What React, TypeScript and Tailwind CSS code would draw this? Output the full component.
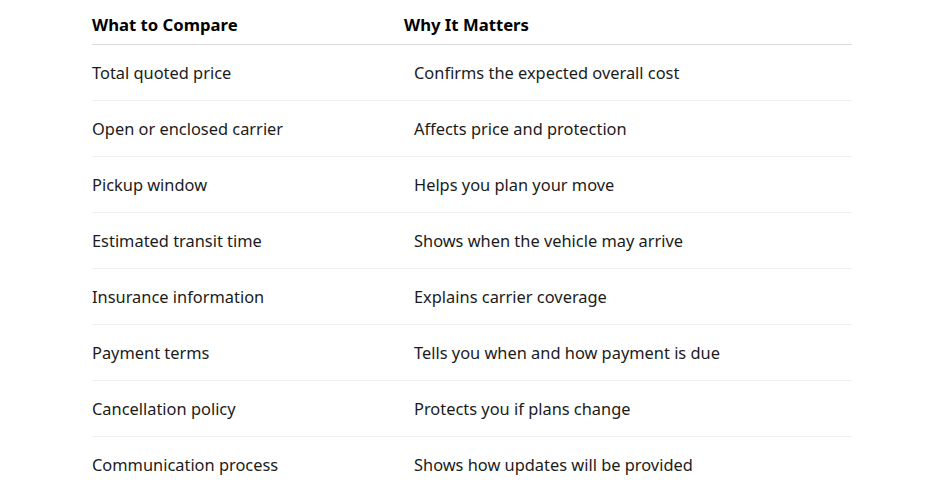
const rows: [string, string][] = [
  ["Total quoted price", "Confirms the expected overall cost"],
  ["Open or enclosed carrier", "Affects price and protection"],
  ["Pickup window", "Helps you plan your move"],
  ["Estimated transit time", "Shows when the vehicle may arrive"],
  ["Insurance information", "Explains carrier coverage"],
  ["Payment terms", "Tells you when and how payment is due"],
  ["Cancellation policy", "Protects you if plans change"],
  ["Communication process", "Shows how updates will be provided"],
];

export default function App() {
  return (
    <div
      className="min-h-screen bg-white px-[92px] text-[#1b1b1b]"
      style={{ fontFamily: '"Noto Sans", "Open Sans", sans-serif' }}
    >
      <table className="w-[760px] border-collapse text-left">
        <thead>
          <tr className="h-[44px] border-b border-[#dcdcdc]">
            <th className="w-[312px] pt-[6px] text-[16.7px] font-bold text-black">What to Compare</th>
            <th className="pt-[6px] text-[16.7px] font-bold text-black">Why It Matters</th>
          </tr>
        </thead>
        <tbody>
          {rows.map(([what, why], i) => (
            <tr
              key={what}
              className={i < rows.length - 1 ? "h-[56px] border-b border-[#f0f0f0]" : "h-[56px]"}
            >
              <td className="pt-[2px] text-[16.4px]">{what}</td>
              <td className="pl-[10px] pt-[2px] text-[16.4px]">{why}</td>
            </tr>
          ))}
        </tbody>
      </table>
    </div>
  );
}
